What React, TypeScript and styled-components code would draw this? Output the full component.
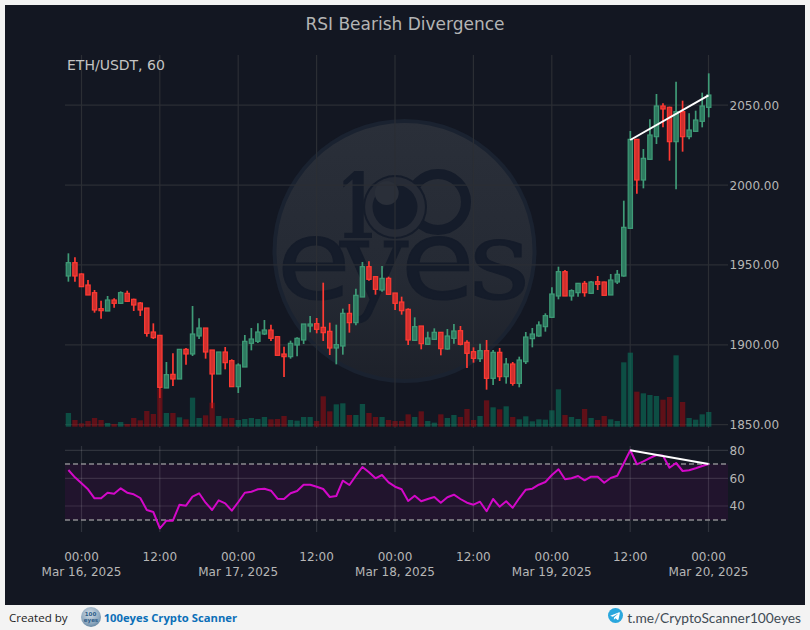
import React from "react";
import styled, { createGlobalStyle } from "styled-components";

const Global = createGlobalStyle`
  html, body { margin: 0; padding: 0; background: #f3f3f3; overflow: hidden; }
`;

const Page = styled.div`
  width: 810px;
  height: 630px;
  display: flex;
  flex-direction: column;
  align-items: center;
  padding-top: 5px;
  box-sizing: border-box;
  background: #f3f3f3;
`;
const Frame = styled.div`
  width: 800px;
  height: 600px;
  flex: none;
  display: flex;
  flex-direction: column;
  background: #131722;
`;
const Title = styled.h1`
  margin: 0;
  height: 38px;
  flex: none;
  box-sizing: border-box;
  padding-top: 9px;
  text-align: center;
  font: 400 17px/20px "DejaVu Sans", sans-serif;
  color: #b4b4b4;
`;
const ChartSvg = styled.svg`
  display: block;
  flex: none;
  width: 800px;
  height: 562px;
`;
const AxisLabel = styled.text`
  font: 400 12px "DejaVu Sans", sans-serif;
  fill: #b6b6b6;
`;
const TimeLabel = styled(AxisLabel)`
  text-anchor: middle;
`;
const Symbol = styled.text`
  font: 400 14px "DejaVu Sans", sans-serif;
  fill: #c4c4c4;
`;
const LogoOne = styled.text`
  font-family: "DejaVu Serif", serif;
  font-weight: 700;
  fill: #151c2a;
`;
const LogoWord = styled.text`
  font-family: "DejaVu Sans", sans-serif;
  font-size: 110px;
  fill: #151c2a;
  stroke: #151c2a;
  stroke-width: 1.2px;
`;
const LogoSlab = styled.tspan`
  font-family: "DejaVu Serif", serif;
`;
const MiniLogoText = styled.text`
  font-size: 5.5px;
  font-weight: 700;
  text-anchor: middle;
  font-family: "DejaVu Sans", sans-serif;
  fill: #2b5c88;
`;
const Footer = styled.footer`
  flex: 1;
  width: 100%;
  display: flex;
  align-items: center;
  justify-content: space-between;
  box-sizing: border-box;
  padding: 0 9px 1px 9px;
`;
const Credit = styled.div`
  display: flex;
  align-items: center;
  font: 400 11.6px "Open Sans", sans-serif;
  color: #1c1c1c;
`;
const CreditLogo = styled.svg`
  width: 22px;
  height: 22px;
  margin: 0 2px 0 12px;
  flex: none;
`;
const Brand = styled.span`
  font: 700 11.25px "Open Sans", sans-serif;
  color: #0b6fb8;
`;
const Contact = styled.div`
  display: flex;
  align-items: center;
  gap: 4px;
  font: 400 13.75px "Lato", sans-serif;
  color: #414b55;
`;
const TelegramIcon = styled.svg`
  width: 15px;
  height: 15px;
  flex: none;
  margin-top: -3px;
`;

type C = [string, number, number, number, number];
const g = "g", r = "r";
// wick top, body top, body bottom, wick bottom; measured at 3x from y=230
const seg1: C[] = [
  [g,70,98,138,155],[r,82,98,138,155],[r,130,132,170,170],[r,150,165,195,195],[r,180,188,240,248],
  [r,212,236,242,266],[g,198,210,243,243],[r,205,210,220,233],[g,184,188,220,222],[r,182,190,214,216],
  [r,206,208,225,243],[r,216,219,240,258],[r,234,234,310,320],[r,280,306,323,327],[r,316,316,472,504],
  [g,396,434,474,474],[r,370,433,447,468],[g,358,358,447,447],[r,354,358,372,404],[g,228,312,372,378],
  [g,265,294,318,327],[r,294,294,366,386],[r,360,360,432,535],[g,366,366,432,432],[r,351,366,398,418],
  [r,388,392,470,470],[g,400,405,470,489],[g,315,334,411,411],[g,294,327,340,361],[g,280,306,334,339],
  [g,270,300,312,315],[r,284,300,325,333],[r,318,320,376,376],[r,350,372,380,441],[g,332,340,380,386],
  [g,322,325,345,379],[g,282,282,330,342],[g,258,282,288,307],[r,264,281,298,310],[r,158,292,308,333],
  [r,278,304,354,375],[g,284,344,354,403],[g,236,250,348,374],[r,222,250,278,308],[g,176,196,278,286],
  [g,96,110,201,201],[r,94,110,148,152],[r,140,140,178,194],[g,108,145,180,185],[r,140,145,193,194],
  [r,189,189,220,240],[r,200,216,242,254],[r,235,238,330,345],[g,262,290,331,331],[r,288,288,341,358],
  [g,305,324,343,345],[g,295,307,328,330],[r,306,307,356,376],[g,297,318,357,359],[g,282,303,325,341],
  [r,288,302,343,346],[r,331,337,370,414],[r,352,365,385,398],[g,341,362,386,396],[r,330,362,445,479],
  [g,360,367,445,465],[r,354,367,440,453],[g,384,402,440,461],[r,396,402,460,467],[g,380,390,460,472],
  [g,306,321,395,402],[g,294,312,326,352],[g,274,285,318,320],
];
// from y=270
const seg2: C[] = [
  [g,130,137,170,185],[g,52,72,142,142],[g,-10,5,78,88],[r,0,5,78,78],[g,58,62,78,92],
  [g,40,40,68,80],[r,33,40,68,80],[g,33,36,70,72],[r,18,35,43,60],[r,35,36,76,76],
  [g,12,30,75,75],[g,0,13,36,42],
];
// from y=70
const seg3: C[] = [
  [g,392,472,618,620],[g,183,208,475,475],[r,208,208,330,371],[g,237,265,330,355],[g,148,195,268,268],
  [g,72,108,200,222],[r,100,108,117,172],[r,110,112,215,272],[g,35,125,215,358],[r,92,125,200,245],
  [g,130,180,200,208],[g,122,150,184,185],[g,68,108,154,172],[g,10,75,112,142],
];
const conv = (list: C[], base: number): C[] =>
  list.map(([c, a, b, d, e]) => [c, base + a / 3, base + b / 3, base + d / 3, base + e / 3]);
const candles: C[] = [...conv(seg1, 230), ...conv(seg2, 270), ...conv(seg3, 70)];

const vol1 = [549,570,580,573,564,570,579,582,576,582,564,571,543,552,475,549,549,562,568,503,564,556,518,558,565,564,570,567,564,567,561,568,567,558,570,572,561,561,573,499,544,523,520,555,555,522,549,561,561,570,573,573,553,561,544,573,578,553,564,555,561,537,570,558,511,532,538,529,561,568,559,574,568];
const vol2 = [449,421,358,435,441,447,417,444,450,438,448,453,277,248,365,370,375,378,389,381,256,396,444,449,433,426];
const volTops = [...vol1.map((z) => 230 + z / 3), ...vol2.map((z) => 270 + z / 3)];

const rsiZ = [90,112,130,148,175,175,158,161,145,158,163,174,210,216,265,242,242,194,197,170,160,188,210,181,190,212,186,158,155,148,146,152,176,177,160,153,134,134,140,147,171,168,122,135,107,81,97,115,105,127,140,148,183,167,184,177,171,188,172,164,177,188,194,185,214,177,200,184,203,175,149,146,134,126,105,88,118,115,108,121,110,110,128,114,107,70,31,73,64,54,45,47,83,69,93,91,85,78,72];

const TOP = 43; // svg origin in page coordinates
const LEFT = 5;
const X = (i: number) => 68.4 + 6.534 * i - LEFT;
const Y = (y: number) => y - TOP;
const rsiPts = rsiZ.map((z, i) => `${X(i).toFixed(1)},${Y(440 + z / 3).toFixed(1)}`).join(" ");

const vticks = [81.5, 159.8, 238.2, 316.6, 395, 473.4, 551.8, 630.2, 708.5];
const timeLabels: [number, string, string?][] = [
  [81.5, "00:00", "Mar 16, 2025"], [159.8, "12:00"], [238.2, "00:00", "Mar 17, 2025"], [316.6, "12:00"],
  [395, "00:00", "Mar 18, 2025"], [473.4, "12:00"], [551.8, "00:00", "Mar 19, 2025"], [630.2, "12:00"],
  [708.5, "00:00", "Mar 20, 2025"],
];
const prices: [number, string][] = [[105.2, "2050.00"], [185.2, "2000.00"], [264.9, "1950.00"], [344.8, "1900.00"], [424.7, "1850.00"]];
const rsiTicks: [number, string][] = [[450.3, "80"], [478.3, "60"], [506, "40"]];

const GRID = "#2b2e34";
const PL = 65 - LEFT, PR = 728 - LEFT;

const Watermark = () => (
  <g transform={`translate(${-LEFT} ${-TOP})`}>
    <circle cx={404.5} cy={251} r={132} fill="#1a2230" />
    <circle cx={404.5} cy={251} r={128} fill="url(#wm)" />
    <LogoOne x={336} y={238} fontSize={89} textLength={42} lengthAdjust="spacingAndGlyphs">1</LogoOne>
    <circle cx={438} cy={202} r={28} fill="none" stroke="#151c2a" strokeWidth={10} />
    <circle cx={395} cy={207} r={32} fill="#151c2a" />
    <circle cx={395} cy={207} r={30} fill="#262b36" />
    <circle cx={395} cy={207} r={22.5} fill="#151c2a" />
    <circle cx={386.7} cy={193} r={12} fill="#2a2f39" />
    <LogoWord transform="scale(1.1 1)" y={298}>
      <tspan x={251.3}>e</tspan>
      <LogoSlab x={309}>y</LogoSlab>
      <tspan x={364}>e</tspan>
      <LogoSlab x={426}>s</LogoSlab>
    </LogoWord>
  </g>
);

export default function App() {
  return (
    <Page>
      <Global />
      <Frame>
        <Title>RSI Bearish Divergence</Title>
        <ChartSvg viewBox="0 0 800 562">
          <defs>
            <linearGradient id="wm" x1="0" y1="0" x2="0" y2="1">
              <stop offset="0" stopColor="#2a2f39" />
              <stop offset="0.6" stopColor="#252a34" />
              <stop offset="1" stopColor="#1d212a" />
            </linearGradient>
          </defs>
          <Watermark />
          {vticks.map((x) => (
            <line key={x} x1={x - LEFT} x2={x - LEFT} y1={Y(55)} y2={Y(428)} stroke={GRID} strokeWidth={1.2} />
          ))}
          {prices.map(([y]) => (
            <line key={y} x1={PL} x2={PR} y1={Y(y)} y2={Y(y)} stroke={GRID} strokeWidth={1.2} />
          ))}
          {candles.map(([c, wt, bt, bb, wb], i) => {
            const stroke = c === g ? "#3f9b77" : "#ff3a33";
            const fill = c === g ? "#2e7a60" : "#cf302e";
            const x = X(i);
            return (
              <g key={i}>
                <line x1={x} x2={x} y1={Y(wt)} y2={Y(wb)} stroke={stroke} strokeWidth={1.7} />
                <rect x={x - 2.15} width={4.3} y={Y(bt)} height={Math.max(bb - bt, 0.5)} fill={fill} stroke={stroke} strokeWidth={1.2} />
              </g>
            );
          })}
          {volTops.map((y, i) => (
            <rect
              key={i}
              x={X(i) - 2.65}
              width={5.3}
              y={Y(y)}
              height={426.7 - y}
              fill={candles[i][0] === g ? "#078064" : "#a50a10"}
              opacity={0.52}
            />
          ))}
          <line x1={630.2 - LEFT} y1={Y(140)} x2={708.5 - LEFT} y2={Y(95.3)} stroke="#fff" strokeWidth={2} />
          <Symbol x={67 - LEFT} y={Y(70)}>ETH/USDT, 60</Symbol>
          {prices.map(([y, t]) => (
            <AxisLabel key={t} x={729.5 - LEFT} y={Y(y + 4.4)}>{t}</AxisLabel>
          ))}

          {/* RSI panel */}
          <rect x={PL} y={Y(464)} width={PR - PL} height={56} fill="#21142d" />
          {vticks.map((x) => (
            <line key={x} x1={x - LEFT} x2={x - LEFT} y1={Y(446)} y2={Y(532)} stroke="#ffffff" strokeOpacity={0.12} strokeWidth={1.2} />
          ))}
          {rsiTicks.map(([y]) => (
            <line key={y} x1={PL} x2={PR} y1={Y(y)} y2={Y(y)} stroke="#ffffff" strokeOpacity={0.12} strokeWidth={1.2} />
          ))}
          {[464, 520].map((y) => (
            <line key={y} x1={PL} x2={PR} y1={Y(y)} y2={Y(y)} stroke="#8b8b8f" strokeWidth={1.4} strokeDasharray="5 3" />
          ))}
          <polyline points={rsiPts} fill="none" stroke="#d308c8" strokeWidth={2} strokeLinejoin="round" />
          <line x1={630.2 - LEFT} y1={Y(450.3)} x2={708.5 - LEFT} y2={Y(464)} stroke="#fff" strokeWidth={2} />
          {rsiTicks.map(([y, t]) => (
            <AxisLabel key={t} x={729.5 - LEFT} y={Y(y + 4.4)}>{t}</AxisLabel>
          ))}
          {timeLabels.map(([x, a, b]) => (
            <g key={x}>
              <TimeLabel x={x - LEFT} y={Y(561)}>{a}</TimeLabel>
              {b && <TimeLabel x={x - LEFT} y={Y(576)}>{b}</TimeLabel>}
            </g>
          ))}
        </ChartSvg>
      </Frame>
      <Footer>
        <Credit>
          Created by
          <CreditLogo viewBox="0 0 22 22">
            <defs>
              <radialGradient id="cl" cx="0.45" cy="0.35" r="0.7">
                <stop offset="0" stopColor="#d3dde6" />
                <stop offset="0.7" stopColor="#8ba6bd" />
                <stop offset="1" stopColor="#5d7f9c" />
              </radialGradient>
            </defs>
            <circle cx={11} cy={11} r={10} fill="url(#cl)" />
            <MiniLogoText x={10.5} y={9.5}>100</MiniLogoText>
            <MiniLogoText x={11} y={15.5}>eyes</MiniLogoText>
          </CreditLogo>
          <Brand>100eyes Crypto Scanner</Brand>
        </Credit>
        <Contact>
          <TelegramIcon viewBox="0 0 24 24">
            <circle cx={12} cy={12} r={12} fill="#2aa7dd" />
            <path
              fill="#fff"
              d="M4.6 11.9 17.9 6.7c.7-.2 1.3.2 1.1 1.2l-2.2 10.6c-.2.8-.7 1-1.4.6l-3.5-2.6-1.7 1.6c-.3.3-.5.4-.9.4l.3-3.5 6.4-5.8c.3-.3 0-.4-.4-.2l-7.9 5-3.4-1.1c-.7-.2-.7-.7.1-1z"
            />
          </TelegramIcon>
          t.me/CryptoScanner100eyes
        </Contact>
      </Footer>
    </Page>
  );
}
